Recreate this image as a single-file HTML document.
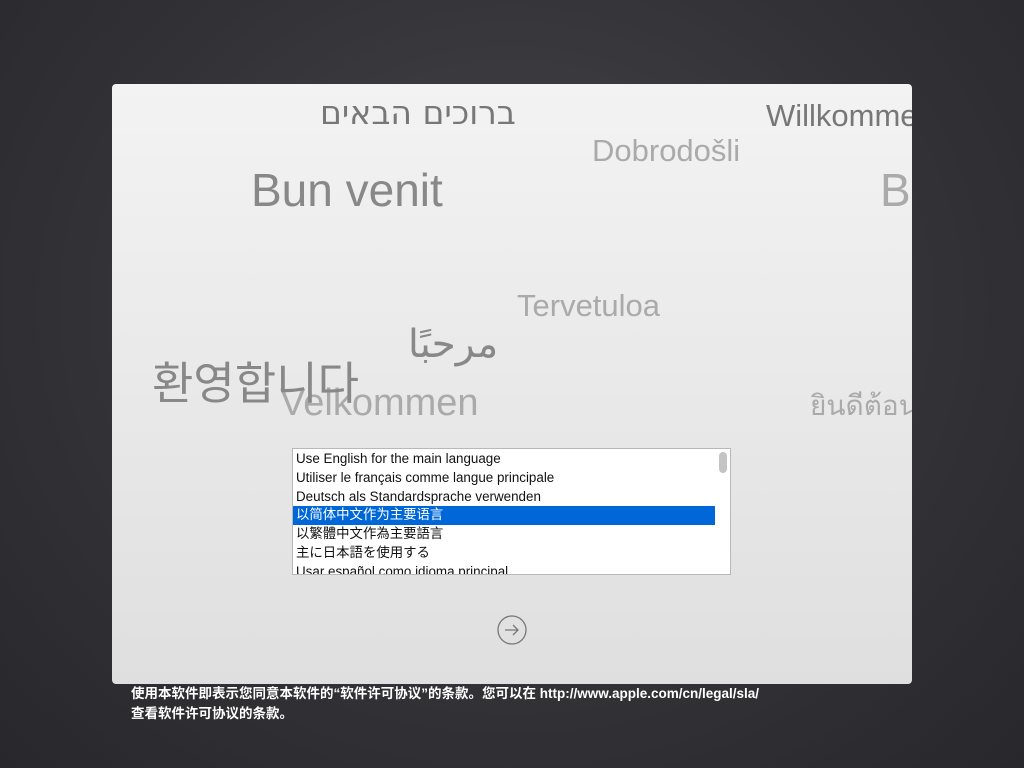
<!DOCTYPE html>
<html><head><meta charset="utf-8"><style>
*{margin:0;padding:0;box-sizing:border-box}
body{width:1024px;height:768px;overflow:hidden;background:radial-gradient(ellipse at 50% 40%,#45454a 0%,#323236 60%,#28282c 100%);font-family:"Liberation Sans","Noto Sans CJK SC",sans-serif;position:relative}
.panel{position:absolute;left:112px;top:84px;width:800px;height:600px;border-radius:4px;background:linear-gradient(#f3f3f3,#dfdfdf);overflow:hidden}
.w{position:absolute;white-space:nowrap;line-height:1}
.list{position:absolute;left:180px;top:364px;width:439px;height:127px;background:#fff;border:1px solid #b8b8b8;overflow:hidden}
.row{height:18.8px;line-height:18.8px;font-size:13.4px;padding-left:3px;color:#111;font-family:"Liberation Sans","Noto Sans CJK SC",sans-serif;white-space:nowrap}
.sel{background:#0067d8;color:#fff;width:422px}
.sb{position:absolute;left:426px;top:3px;width:8px;height:21px;border-radius:4px;background:#c4c4c4}
.foot{position:absolute;left:131px;top:684px;color:#fff;font-size:13.5px;line-height:20px;font-weight:bold;white-space:nowrap}
</style></head><body>
<div class="panel">
<div class="w" style="left:208px;top:12px;font-size:33px;color:#777;font-family:'DejaVu Sans',sans-serif">ברוכים הבאים</div>
<div class="w" style="left:654px;top:16px;font-size:31px;color:#777">Willkommen</div>
<div class="w" style="left:480px;top:51px;font-size:31px;color:#aaa">Dobrodošli</div>
<div class="w" style="left:139px;top:83px;font-size:46px;color:#888">Bun venit</div>
<div class="w" style="left:768px;top:83px;font-size:46px;color:#aaa">B</div>
<div class="w" style="left:405px;top:206px;font-size:31px;color:#aaa">Tervetuloa</div>
<div class="w" style="left:296px;top:241px;font-size:39px;color:#888;font-family:'DejaVu Sans',sans-serif">مرحبًا</div>
<div class="w" style="left:168px;top:300px;font-size:38px;color:#aaa">Velkommen</div>
<div class="w" style="left:40px;top:273px;font-size:45px;color:#888;font-family:'Noto Sans CJK KR',sans-serif">환영합니다</div>
<div class="w" style="left:698px;top:308px;font-size:28px;color:#aaa;font-family:'DejaVu Sans',sans-serif">ยินดีต้อนรับ</div>
<div class="list">
<div class="row" style="margin-top:1px">Use English for the main language</div>
<div class="row">Utiliser le français comme langue principale</div>
<div class="row">Deutsch als Standardsprache verwenden</div>
<div class="row sel">以简体中文作为主要语言</div>
<div class="row">以繁體中文作為主要語言</div>
<div class="row" style="font-family:'Liberation Sans','Noto Sans CJK JP',sans-serif">主に日本語を使用する</div>
<div class="row">Usar español como idioma principal</div>
<div class="sb"></div>
</div>
<svg style="position:absolute;left:384px;top:530px" width="32" height="32" viewBox="0 0 32 32"><circle cx="16" cy="16" r="14" fill="none" stroke="#777" stroke-width="1.3"/><path d="M9 16H22M17 11L22 16L17 21" fill="none" stroke="#777" stroke-width="1.3"/></svg>
</div>
<div class="foot">使用本软件即表示您同意本软件的“软件许可协议”的条款。您可以在 http://www.apple.com/cn/legal/sla/<br>查看软件许可协议的条款。</div>
</body></html>
